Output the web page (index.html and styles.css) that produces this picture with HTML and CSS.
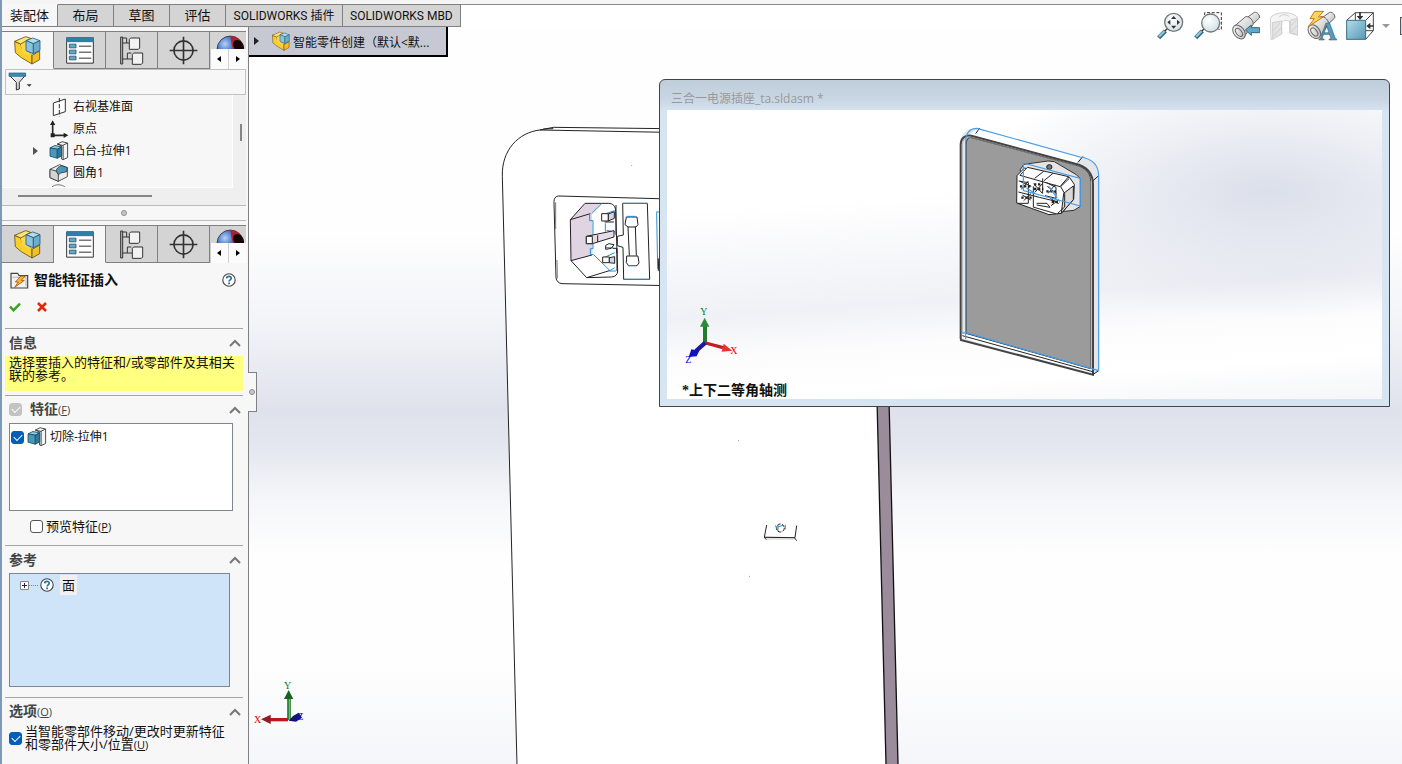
FILE: index.html
```html
<!DOCTYPE html>
<html lang="zh-CN">
<head>
<meta charset="utf-8">
<title>SOLIDWORKS</title>
<link rel="stylesheet" href="styles.css">
</head>
<body>
<svg class="defs" aria-hidden="true">
  <defs>
    <linearGradient id="blueFace" x1="0" y1="0" x2="1" y2="1"><stop offset="0" stop-color="#b4dceb"/><stop offset="1" stop-color="#5598b6"/></linearGradient>
    <linearGradient id="steel" x1="0" y1="0" x2="1" y2="1"><stop offset="0" stop-color="#fff"/><stop offset="1" stop-color="#b9b9b9"/></linearGradient>
    <radialGradient id="ball" cx=".3" cy=".3" r=".8"><stop offset="0" stop-color="#b7d2f5"/><stop offset=".4" stop-color="#3e6fc4"/><stop offset="1" stop-color="#142c66"/></radialGradient>
    <radialGradient id="lens" cx=".4" cy=".35" r=".7"><stop offset="0" stop-color="#fff"/><stop offset="1" stop-color="#cfe0e6"/></radialGradient>
  </defs>
  <symbol id="part" viewBox="46 104 81 90">
    <g stroke="#6b4e0c" stroke-width="2.5" stroke-linejoin="round">
      <path fill="#f9cf2d" d="M48 123l18 8 4 14 14 5 16 15v26L68 172 50 157z"/>
      <path fill="#fbd84a" d="M66 131l20-10v32l14 12-16-3-14-10z" stroke="none"/>
      <path fill="#eec02a" d="M100 165l23-13v26l-23 13z"/>
      <path fill="#fce47a" d="M48 123l33-14 15 5-30 17z"/>
    </g>
    <g stroke="#2a5b79" stroke-width="2.5" stroke-linejoin="round">
      <path fill="#b4ddec" d="M82 121l20-8 22 8-20 9z"/><path fill="#8cc4dd" d="M82 121l22 9v30l-22-9z"/><path fill="#6badcc" d="M104 130l20-9v29l-20 10z"/>
    </g>
  </symbol>
  <symbol id="props" viewBox="198 110 84 80">
    <path fill="#fff" stroke="#333" stroke-width="3" d="M200 112h80v76h-80z"/><path fill="#2c7fa5" d="M199 111h82v14h-82z"/>
    <g fill="#62a9c9" stroke="#244f66" stroke-width="2.5"><path d="M208 131h20v11h-20zM208 149h20v11h-20zM208 167h20v11h-20z"/></g>
    <path stroke="#333" stroke-width="3" d="M237 137h37M237 155h37M237 173h37"/>
  </symbol>
  <symbol id="config" viewBox="360 106 75 87">
    <g fill="#f2f2f2" stroke="#333" stroke-width="3">
      <path fill="#bbb" d="M365 109h6v81h-6z"/><path d="M371 127h20M371 175h29M371 112h12v15M385 175v-18h12" fill="none"/>
      <path d="M391 116l4-4h27v30l-4 4h-27zM400 161l4-4h27v30l-4 4h-27z"/>
    </g>
  </symbol>
  <symbol id="target" viewBox="508 106 88 88">
    <circle cx="552" cy="150" r="29" fill="none" stroke="#333" stroke-width="5"/><path d="M510 150h84M552 108v84" stroke="#333" stroke-width="5"/>
  </symbol>
  <symbol id="globe" viewBox="648 104 82 41">
    <circle cx="690" cy="146" r="39" fill="url(#ball)" stroke="#222" stroke-width="2"/>
    <path d="M690 107c18 0 33 12 38 28l-10 10h-20c-6-12-5-26-8-38z" fill="#b21f2e"/><ellipse cx="714" cy="136" rx="14" ry="19" transform="rotate(-35 714 136)" fill="#150506"/>
  </symbol>
  <symbol id="boss" viewBox="148 138 58 56">
    <g stroke="#333" stroke-width="2.5" stroke-linejoin="round"><path fill="#f4f4f4" d="M172 146l14-7 16 4v42l-13 6-5-2v-38z"/><path fill="none" d="M189 191v-42l13-6M172 146l17 4"/>
    <path fill="#8ec5dd" stroke="#1f4f68" d="M151 157l14-7 20 4-13 7z"/><path fill="#4a99bd" stroke="#1f4f68" d="M151 157l21 4v26l-21-6z"/><path fill="#2f7698" stroke="#1f4f68" d="M172 161l13-7v26l-13 7z"/></g>
  </symbol>
  <symbol id="chevron" viewBox="0 0 12 8"><path fill="none" stroke="#777" stroke-width="2" d="M1 7l5-5 5 5"/></symbol>
  <symbol id="help" viewBox="0 0 14 14"><circle cx="7" cy="7" r="6.2" fill="#fff" stroke="#444" stroke-width="1.1"/><path d="M4.700 5.400C4.800 2.600 9.400 2.800 9.200 5.300 9 6.800 7.100 6.900 7.100 8.600" fill="none" stroke="#267196" stroke-width="1.700"/><path d="M6.200 9.600h1.800v1.700H6.200z" fill="#267196"/></symbol>
</svg>

<div class="app">
  <header class="ribbon">
    <nav class="tabs" aria-label="命令选项卡">
      <button class="tab tab-on">装配体</button><button class="tab">布局</button><button class="tab">草图</button><button class="tab">评估</button><button class="tab">SOLIDWORKS 插件</button><button class="tab">SOLIDWORKS MBD</button>
    </nav>
    <div class="ribbon-rest"></div>
  </header>

  <aside class="panel">
    <div class="icon-tabs">
      <button class="itab itab-on" aria-label="设计树"><svg width="27" height="30"><use href="#part"/></svg></button>
      <button class="itab" aria-label="属性"><svg width="28" height="27"><use href="#props"/></svg></button>
      <button class="itab" aria-label="配置"><svg width="25" height="29"><use href="#config"/></svg></button>
      <button class="itab" aria-label="尺寸"><svg width="29" height="29"><use href="#target"/></svg></button>
      <div class="itab-more"><svg class="globe" width="28" height="14"><use href="#globe"/></svg>
        <div class="pager"><button aria-label="向左"><svg width="5" height="6"><path d="M4 0v6L0 3z"/></svg></button><button aria-label="向右"><svg width="5" height="6"><path d="M1 0v6l4-3z"/></svg></button></div>
      </div>
    </div>
    <button class="filter" aria-label="过滤器"><svg width="24" height="20" viewBox="22 220 72 60"><path d="M26 230h48L56 251v20l-9 3v-23z" fill="url(#steel)" stroke="#333" stroke-width="3"/><path d="M25 223h50v10H25z" fill="#398db5" stroke="#205a78" stroke-width="2"/><path d="M78 257h15l-7 7z" fill="#333"/></svg></button>
    <div class="tree-wrap">
      <ul class="tree">
        <li><span class="twist"></span><svg width="20" height="20" viewBox="148 2 60 60"><path fill="#fcfcfc" stroke="#333" stroke-width="3" d="M161 20l36-12v38l-36 12z"/><path stroke="#333" stroke-width="3" stroke-dasharray="13 5" d="M179 5v55"/></svg>右视基准面</li>
        <li><span class="twist"></span><svg width="20" height="20" viewBox="148 68 60 60"><path fill="none" stroke="#2a2a2a" stroke-width="5" d="M159 80v37h36"/><path fill="#222" d="M151 86l8-14 8 14zM192 109l14 8-14 8zM153 111h12v12h-12z"/></svg>原点</li>
        <li><span class="twist"><svg width="5" height="8"><path d="M0 0l5 4-5 4z" fill="#555"/></svg></span><svg width="20" height="20"><use href="#boss"/></svg>凸台-拉伸1</li>
        <li><span class="twist"></span><svg width="20" height="20" viewBox="148 200 60 60"><g stroke="#333" stroke-width="2.5" stroke-linejoin="round"><path fill="#eee" d="M151 219l29-14 23 9v27l-27 14-25-11z"/><path fill="#4a99bd" d="M169 224c2-8 8-13 16-16l18 6-2 12-18 4c-4 2-6 4-7 7z"/><path fill="#d4d4d4" d="M151 219l18 5 7 11v20l-25-11z"/></g></svg>圆角1</li>
        <li class="tree-cut"><span class="twist"></span><svg width="20" height="4"><path d="M3 3c3-3 9-3 13 0" fill="none" stroke="#777"/></svg></li>
      </ul>
      <div class="vscroll"><i></i></div>
      <div class="hscroll"><i></i></div>
    </div>
    <div class="splitter"><i></i></div>
    <div class="icon-tabs">
      <button class="itab" aria-label="设计树"><svg width="27" height="30"><use href="#part"/></svg></button>
      <button class="itab itab-on" aria-label="属性"><svg width="28" height="27"><use href="#props"/></svg></button>
      <button class="itab" aria-label="配置"><svg width="25" height="29"><use href="#config"/></svg></button>
      <button class="itab" aria-label="尺寸"><svg width="29" height="29"><use href="#target"/></svg></button>
      <div class="itab-more"><svg class="globe" width="28" height="14"><use href="#globe"/></svg>
        <div class="pager"><button aria-label="向左"><svg width="5" height="6"><path d="M4 0v6L0 3z"/></svg></button><button aria-label="向右"><svg width="5" height="6"><path d="M1 0v6l4-3z"/></svg></button></div>
      </div>
    </div>

    <div class="pm-head">
      <svg width="19" height="19" viewBox="29 155 57 57"><path fill="#f2f2f2" stroke="#444" stroke-width="3.5" d="M32 206v-44h20l4 7h26v37z"/><path fill="none" stroke="#999" stroke-width="2" d="M37 174h40v27"/><path fill="#fbb72c" stroke="#a5500e" stroke-width="2.5" stroke-linejoin="round" d="M62 170h12L63 183h9l-29 21 11-16h-9z"/></svg>
      <h1>智能特征插入</h1>
      <button class="plain" aria-label="帮助"><svg width="14" height="14"><use href="#help"/></svg></button>
    </div>
    <div class="pm-actions">
      <button class="plain" aria-label="确定"><svg width="12" height="10"><path d="M1 4.500l3.500 3.800L11 1.600" fill="none" stroke="#3ba11f" stroke-width="2.500"/></svg></button>
      <button class="plain" aria-label="取消"><svg width="10" height="10"><path d="M1 1l8 8M9 1l-8 8" stroke="#dc2a0b" stroke-width="2.500"/></svg></button>
    </div>

    <section class="group">
      <h2><span>信息</span><svg width="12" height="8"><use href="#chevron"/></svg></h2>
      <p class="message">选择要插入的特征和/或零部件及其相关联的参考。</p>
    </section>
    <section class="group">
      <h2><input type="checkbox" id="feat" class="box" checked disabled><label for="feat">特征<small>(<u>F</u>)</small></label><svg width="12" height="8"><use href="#chevron"/></svg></h2>
      <div class="list">
        <label class="list-row"><input type="checkbox" class="box" checked><svg width="20" height="20"><use href="#boss"/></svg>切除-拉伸1</label>
      </div>
      <label class="preview"><input type="checkbox" class="box"><span>预览特征<small>(<u>P</u>)</small></span></label>
    </section>
    <section class="group">
      <h2><span>参考</span><svg width="12" height="8"><use href="#chevron"/></svg></h2>
      <div class="refs">
        <div class="ref-row"><svg width="18" height="9"><path d="M.5.5h8v8h-8z" fill="#fff" stroke="#888"/><path d="M2 4.500h5M4.500 2v5" stroke="#224"/><path d="M9 4.500h9" stroke="#888" stroke-dasharray="1 1"/></svg><svg width="14" height="14"><use href="#help"/></svg><span>面</span></div>
      </div>
    </section>
    <section class="group">
      <h2><span>选项<small>(<u>O</u>)</small></span><svg width="12" height="8"><use href="#chevron"/></svg></h2>
      <label class="option"><input type="checkbox" class="box" checked><span>当智能零部件移动/更改时更新特征和零部件大小/位置<small>(<u>U</u>)</small></span></label>
    </section>
    <div class="grip"><i></i></div>
  </aside>

  <main class="stage">
    <svg class="model" viewBox="249 27 1153 737" preserveAspectRatio="xMinYMin slice" aria-label="零件模型">
      <path fill="#fff" d="M502 180C501 155 518 130 545 128L660 127H875L889 406 898 764H517z"/>
      <path fill="#9b8c9b" d="M877 400h12l9 364h-12z"/>
      <path fill="none" stroke="#111" stroke-width="1.300" d="M889 400l9 364M877 400l9 364"/>
      <g transform="translate(490 115) scale(.33333)" fill="none" stroke="#222" stroke-width="3">
        <path d="M81 1950L46 540 37 185C34 105 86 52 150 45M150 45l40-8 340 4M150 45l380 7M160 42l30-1"/>
        <path d="M205 243l335 9M205 243c-9 1-13 8-13 17l6 228c1 10 8 17 18 18l324 6"/><path stroke="#777" d="M197 262v80M201 435l1 55"/>
        <path fill="#e0d4e2" stroke="none" d="M285 265h50l-29 31 2 124-65 17-2-123z"/>
        <path d="M335 265h-50l-44 49 2 123 47 51 75-2c12-1 18-8 18-18l-6-178c0-16-7-25-22-25zM241 314l60-18M243 437l63-17M290 488l68-21"/>
        <path stroke="#2191d6" d="M335 266l-29 29M299 297v20h10v84h-8v18h10l50 49M374 287l-30 10M346 325v25M350 346l25 5M345 398h25M374 413l-28 13M374 458l-16 10h20"/>
        <path fill="#fff" d="M335 296h20v22h-20zM338 426h20v17h-20z"/><path fill="#d2d4e8" d="M355 297l18-7v20l-18 8zM358 428l16-3v20l-16-2z"/>
        <path fill="#e8dbe8" d="M289 364l83-17v19l-65 20h-18z"/><path fill="#fff" d="M289 364h18v22h-18z"/><path d="M323 361v20M347 391l10-5 15 3-8 11-17 3zM344 321h28M368 400h12v14M378 270v90M381 400v68"/>
        <path d="M398 265h74l7 228h-78l-2-96-17-5M398 265l2 95-18 4v27M414 335l4 87M436 335l3 87M409 306h32l3 23-6 7h-24l-9-7zM410 423h34l3 21-6 8h-25l-7-9z"/>
        <path stroke="#2191d6" d="M398 265h74M401 493h78M411 304h25M413 452h25M498 291h20M503 467h12M500 293l3 170"/>
        <path d="M505 430l1 36"/><path d="M425 151v2" stroke="#777"/>
      </g>
      <g transform="translate(740 400) scale(.33333)" fill="none" stroke="#222" stroke-width="3"><path fill="#dfe2df" stroke="none" d="M74 408l92 4-5 8-82-1z"/><path d="M80 375l-7 37 92 1 5-36M73 412l6 7M163 413l7 9"/><circle cx="121" cy="384" r="12" stroke-dasharray="11 4"/><path stroke="#2191d6" d="M106 376l8 17M112 381l18-5"/><path stroke="#777" d="M114 375v19M136 374v14M28 529h2M-6 122h2"/></g>
      <g transform="translate(0 590) scale(.33333)">
        <path stroke="#217c2d" stroke-width="11" d="M867 390v-67"/><path stroke="#7dcc82" stroke-width="3" d="M868 390v-67"/><path fill="#16651f" d="M852 327l14-27 14 27z"/><path stroke="#bd171e" stroke-width="10" d="M864 389h-58"/><path fill="#921c24" d="M812 374l-29 14 29 14z"/><path fill="#13137a" d="M866 392l13-14 17-10 10 15-18 12z"/>
        <g class="axis"><text x="762" y="399" fill="#e00">X</text><text x="852" y="297" fill="#087d10">Y</text><text x="892" y="389" fill="#00e">Z</text></g>
      </g>
    </svg>
    <button class="flyout"><svg width="5" height="8"><path d="M0 0l5 4-5 4z" fill="#222"/></svg><svg width="18" height="20"><use href="#part"/></svg><span>智能零件创建（默认&lt;默...</span></button>

    <div class="view-tools">
      <button aria-label="整屏显示全图"><svg viewBox="48 30 84 96"><path d="M56 113l20-20" stroke="#36677e" stroke-width="13"/><path d="M57 110l17-17" stroke="#8fc5db" stroke-width="7"/><path d="M74 94l9-9" stroke="#333" stroke-width="4"/><circle cx="101" cy="67" r="27" fill="url(#lens)" stroke="#777" stroke-width="4"/><path fill="#333" d="M101 48l8 9H93zM101 86l8-9H93zM82 67l9-8v16zM120 67l-9-8v16z"/></svg></button>
      <button aria-label="局部放大"><svg viewBox="162 30 84 96"><path d="M167 113l20-20" stroke="#36677e" stroke-width="13"/><path d="M168 110l17-17" stroke="#8fc5db" stroke-width="7"/><path d="M185 94l9-9" stroke="#333" stroke-width="4"/><circle cx="212" cy="69" r="27" fill="url(#lens)" stroke="#777" stroke-width="4"/><path fill="none" stroke="#333" stroke-width="3" stroke-dasharray="9 5" d="M194 45v-7h50v50h-9"/></svg></button>
      <button aria-label="上一视图"><svg viewBox="276 30 84 96"><g fill="url(#steel)" stroke="#666" stroke-width="3"><path d="M322 52l21-15c9-2 18 9 15 17l-18 17z"/><path d="M284 78l33-28c12-2 25 13 22 24l-28 38z"/><ellipse cx="297" cy="96" rx="16" ry="23" transform="rotate(-38 297 96)"/><ellipse cx="297" cy="97" rx="8" ry="14" transform="rotate(-38 297 97)"/></g><path fill="#63a9c7" stroke="#2e6780" stroke-width="3" d="M316 90l18-15v8h25v15h-25v8z"/></svg></button>
      <button aria-label="剖面视图" disabled><svg viewBox="390 30 84 96"><g fill="#f5f5f5" stroke="#cfcfcf" stroke-width="3" stroke-linejoin="round"><path d="M391 55c8-22 74-22 82-1v52l-24-7V65c-8-6-18-5-24 2v35l-32 17z"/><path fill="#e4e4e4" d="M398 68l27-5v38l-27 17zM451 60l22-5v49l-22-6z"/><path fill="none" d="M400 91l20-22M400 109l24-26M453 77l17-17M453 96l19-20M417 52c7-10 24-10 31-1"/></g></svg></button>
      <button aria-label="动态注解视图"><svg class="spill" viewBox="504 30 84 96"><g fill="url(#steel)" stroke="#666" stroke-width="3"><path d="M548 52l21-15c9-2 18 9 15 17l-18 17z"/><path d="M510 76l33-26c12-2 25 13 22 24l-28 38z"/><ellipse cx="523" cy="95" rx="16" ry="23" transform="rotate(-38 523 95)"/><ellipse cx="523" cy="96" rx="8" ry="14" transform="rotate(-38 523 96)"/></g><path fill="#fcd65d" stroke="#c6751e" stroke-width="3" d="M524 34h27l-16 17h14l-45 30 19-25h-13z"/><text class="annot" x="536" y="121">A</text></svg></button>
      <button aria-label="视图定向"><svg viewBox="618 30 84 96"><path fill="#fff" stroke="#444" stroke-width="3" d="M620 61l26-23h54v54l-23 26M646 38v54h54M620 118l26-26M677 61l23-23"/><path fill="url(#blueFace)" stroke="#376e87" stroke-width="3" d="M620 61h57v57h-57z"/><path stroke="#333" stroke-width="5" d="M660 36v16M701 78h-14"/><path fill="#333" d="M650 48h20l-10 12zM691 68v20l-12-10z"/></svg></button>
      <button class="drop" aria-label="更多"><svg viewBox="0 0 8 4"><path fill="#999" d="M0 0h8L4 4z"/></svg></button>
      <span class="next-tool"></span>
    </div>

    <section class="preview-win">
      <h2>三合一电源插座_ta.sldasm *</h2>
      <div class="preview-body">
        <svg class="model" viewBox="667 110 715 289" preserveAspectRatio="xMinYMin slice" aria-label="预览模型">
          <g transform="translate(940 115) scale(.33333)" fill="none" stroke="#222" stroke-width="3">
            <path fill="#e3e5ea" stroke="none" d="M60 87c0-30 22-47 49-47l309 86c38 6 57 24 58 57v587l-18 11L60 673z"/>
            <path fill="#fff" stroke="none" d="M88 59l25-18 309 88-16 16zM70 655l388 108v16L64 668z"/>
            <path fill="#9b9b9b" d="M78 655V92c0-13 3-24 13-25l317 84c29 7 44 23 44 50v560z"/>
            <path stroke="#444" stroke-width="6" d="M62 672V89c1-22 16-29 32-27l312 84c38 9 53 31 53 63v570L60 674"/>
            <path stroke="#999" stroke-width="2" d="M67 655V89c1-18 14-24 28-21l310 83c35 9 47 31 47 60v549"/>
            <path d="M107 56l12-17M414 142l15-18M458 198l17-15M458 779l18-12M67 662l391 108"/>
            <path stroke="#459ce9" stroke-width="3.500" d="M77 672V83c0-29 12-43 34-43l309 86c38 5 56 24 56 57v584M65 654l12-1 399 114"/>
            <path fill="#e5e5e5" stroke="#333" d="M240 165l12-17 72-10 19 2 66 39 12 12v83l-19 12-85 9z"/>
            <path fill="#fff" d="M231 182l22-23 86 20 50 9 14 20-2 45-37 42-37 4-97-35z"/>
            <path fill="#fff" d="M240 181l22-24 124 28-26 30z"/>
            <path fill="#d9d9d9" d="M371 235l29-22v41l-36 41z"/>
            <path d="M284 190l27-21M312 197l27-22M362 215l26-25M362 215l12 21v40l-22 20M236 198l29 5v62h-31M280 214v62M308 190v46M319 203l29 14v33l-33-8M279 276l68 20M235 231l63 16 54 13M290 265h31l9 12-40-7M240 199l34 15M244 223l21-25M281 206l25 28M285 232l22-26M322 214l27 21M325 235l20-26M247 240l25 15M251 257l22-21M331 250l25 16M333 272l24-18"/>
            <path stroke-width="7" stroke-dasharray="7 5" d="M240 214h34M282 222h28M319 229h29M244 248h31M335 261h25M282 208h23"/>
            <ellipse cx="328" cy="156" rx="8" ry="7" fill="#777"/>
            <path stroke="#459ce9" stroke-width="3.500" d="M250 144l171 46v83l-171-46zM260 219l27 18M326 213l26 37"/>
          </g>
          <g transform="translate(655 290) scale(.33333)">
            <path stroke="#217c2d" stroke-width="12" d="M150 160v-58"/><path fill="#2c8b38" d="M135 110l14-27 14 27z"/><path stroke="#c51c22" stroke-width="10" d="M152 159l52 14"/><path fill="#e33234" d="M206 161l26 21-32 3z"/><path stroke="#1b1b9b" stroke-width="13" d="M151 158l-28 25"/><path fill="#1313c6" d="M109 178l24 4-8 17-24 2z"/>
            <g class="axis"><text x="226" y="192" fill="#e00">X</text><text x="136" y="75" fill="#087d10">Y</text><text x="91" y="218" fill="#00e">Z</text></g>
          </g>
        </svg>
        <p class="view-name">*上下二等角轴测</p>
      </div>
    </section>
  </main>
</div>
</body>
</html>
```
FILE: styles.css
```css
* { box-sizing: border-box; }
body {
  margin: 0;
  background: #fff;
  color: #111;
  font: 12px/16px "Open Sans", "Noto Sans CJK SC", sans-serif;
}
button { margin: 0; padding: 0; border: 0; background: none; color: inherit; font: inherit; }
svg { display: block; flex: none; }
h1, h2, p, ul { margin: 0; padding: 0; }
.defs { position: absolute; width: 0; height: 0; }

.app {
  display: grid;
  grid-template-columns: 247px 1fr;
  grid-template-rows: auto 1fr;
  height: 100vh;
  overflow: hidden;
  border-left: 2px solid #7c9ab8;
}

/* Command tabs */
.ribbon { grid-column: 1 / -1; display: flex; height: 27px; }
.tabs { display: flex; padding-top: 4px; background: #f5f5f5; }
.tab {
  min-width: 117px;
  padding: 0 7px;
  border: 1px solid #808080;
  border-left: 0;
  background: #d4d4d4;
  font-family: Roboto, "Noto Sans CJK SC", sans-serif;
  font-size: 12px;
  white-space: nowrap;
}
.tab:nth-child(-n+4) { min-width: 56px; padding: 0; font-size: 13px; }
.tab:first-child { border-top-color: transparent; background: #f7f7f7; }
.ribbon-rest { flex: 1; height: 5px; background: #f5f5f5; border-bottom: 1px solid #8a8a8a; }

/* Side panel */
.panel {
  position: relative;
  z-index: 1;
  display: flex;
  flex-direction: column;
  background: #f7f7f7;
  border-right: 1px solid #808080;
  padding-top: 4px;
}
.panel > * { flex: none; }
.icon-tabs { display: flex; height: 38px; margin-right: 2px; border-top: 1px solid #808080; }
.itab {
  display: grid;
  place-items: center;
  width: 52px;
  background: #d4d4d4;
  border-right: 1px solid #808080;
  border-bottom: 1px solid #808080;
}
.itab-on { background: #f7f7f7; border-bottom-color: transparent; }
.itab-more { flex: 1; display: flex; flex-direction: column; justify-content: space-between; align-items: flex-end; background: #d4d4d4; overflow: hidden; }
.globe { margin: 3px 2px 0 0; }
.pager { display: flex; gap: 1px; width: 100%; height: 20px; padding-left: 1px; background: #d0d0d0; }
.pager button { flex: 1; display: grid; place-items: center; background: #fbfbfb; }
.filter { display: block; height: 26px; margin: 0 2px 0 3px; padding: 2px; border: 1px solid #c2c2c2; }
.tree-wrap { display: grid; grid-template: 93px 17px / 231px 1fr; margin-right: 2px; background: #efefef; }
.tree { padding-top: 1px; list-style: none; overflow: hidden; background: #f7f7f7; border-bottom: 1px solid #fff; border-right: 1px solid #fff; }
.tree li { display: flex; align-items: center; height: 22px; gap: 4px; }
.tree li.tree-cut { height: 4px; }
.twist { width: 43px; padding-left: 31px; }
.vscroll { padding: 29px 0 0 7px; }
.vscroll i { display: block; width: 2px; height: 17px; background: #858585; }
.hscroll { grid-column: 1 / -1; padding: 7px 16px; }
.hscroll i { display: block; width: 134px; height: 2px; background: #858585; }
.splitter { display: grid; place-items: center; height: 16px; margin: 0 2px 4px 0; border: solid #bbb; border-width: 1px 0; }
.splitter i, .grip i { width: 6px; height: 6px; border: 1px solid #8c8c8c; border-radius: 50%; background: #c8c8c8; }

.pm-head { display: flex; align-items: center; gap: 5px; padding: 7px 12px 0 8px; }
.pm-head h1 { flex: 1; font-size: 14px; line-height: 20px; }
.pm-actions { display: flex; align-items: center; gap: 16px; height: 38px; padding: 0 7px 5px; }
.group { margin: 0 5px 0 3px; border-top: 1px solid #a5a5a5; }
.group h2 { display: flex; align-items: center; gap: 8px; height: 27px; padding: 0 2px 0 4px; color: #444; font-size: 14px; font-weight: 600; }
.group h2 > svg { margin-left: auto; }
small { font-size: 11px; font-weight: 400; }
.message { height: 35px; margin-bottom: 4px; padding: 0 4px; background: #ffff80; font-size: 13px; line-height: 13px; }
.list { height: 88px; margin: 0 10px 0 4px; padding: 3px 1px; border: 1px solid #7f8490; background: #fff; }
.list-row { display: flex; align-items: center; gap: 3px; }
.box { appearance: none; flex: none; width: 13px; height: 13px; margin: 0; border: 1px solid #555; border-radius: 3px; background: #fdfdfd; }
.box:checked { border-color: #005fb8; background: #005fb8; }
.box:disabled { border-color: #c3c3c3; background: #c3c3c3; }
.box:checked::after { content: ""; display: block; width: 7px; height: 4px; margin: 2px; border: solid #fff; border-width: 0 0 1px 1px; transform: rotate(-45deg); }
.preview { display: flex; align-items: center; gap: 3px; height: 34px; padding: 0 25px 4px; font-size: 13px; }
.refs { height: 114px; margin: 0 13px 10px 4px; padding: 1px 10px; border: 1px solid #7f8490; background: #cfe4f9; }
.ref-row { display: flex; align-items: center; gap: 2px; }
.ref-row span { margin-left: 4px; padding: 2px; background: #f0f0f0; font-size: 13px; }
.option { display: flex; align-items: center; gap: 3px; padding: 0 13px 0 4px; font-size: 13px; line-height: 13px; }
.grip {
  position: absolute;
  top: 345px;
  left: 100%;
  display: grid;
  place-items: center;
  width: 9px;
  height: 40px;
  border: 1px solid #808080;
  border-left: 0;
  background: #f7f7f7;
}

/* Graphics area */
.stage {
  position: relative;
  background: linear-gradient(#fefefe 0, #fefefe 28%, #f3f4f8 40%, #dfe2ec 52%, #e4e7ef 57%, #f5f6f9 64%, #fefefe 72%, #fefefe 86%, #f5f6f9 100%);
}
.model { width: 100%; height: 100%; }
.axis { font: 30px "Liberation Serif", serif; }
.annot { font: bold 74px "Liberation Serif", serif; fill: #5d9dbb; stroke: #2c6680; stroke-width: 2px; }
.spill { overflow: visible; }
.flyout {
  position: absolute;
  top: 0;
  left: 0;
  display: flex;
  align-items: center;
  gap: 8px;
  width: 199px;
  height: 30px;
  padding-left: 5px;
  border: solid #000;
  border-width: 0 2px 2px 0;
  background: #c6c9d3;
  white-space: nowrap;
}
.flyout svg + svg { margin-left: 5px; }
.flyout span { margin-left: -5px; padding-top: 4px; }
.view-tools { position: absolute; top: -17px; right: 0; display: flex; align-items: center; gap: 10px; }
.view-tools button { width: 28px; }
.view-tools button.drop { width: 8px; margin-left: -2px; }
.next-tool { width: 2px; height: 18px; border: 1px solid #555; border-right: 0; background: #ccdbe5; }

/* Floating preview window */
.preview-win {
  position: absolute;
  top: 52px;
  right: 12px;
  width: 731px;
  padding: 0 7px 7px;
  border: 1px solid #444;
  border-radius: 6px 6px 0 0;
  background: linear-gradient(#bfccda 0, #c9d7e5 20px, #d7e4f1 32px);
}
.preview-win h2 { padding: 11px 4px 3px; color: #999; font-size: 12px; font-weight: 400; }
.preview-body {
  position: relative;
  height: 289px;
  background:
    radial-gradient(ellipse 300px 130px at 84% 28%, #dbdfea, #dbdfea00),
    linear-gradient(176deg, #fff 30%, #f0f1f6 62%, #fcfcfd 74%, #fff 86%, #f5f6f9 100%);
}
.view-name { position: absolute; left: 15px; bottom: 0; font: bold 14px/16px "Liberation Serif", "Noto Sans CJK SC", serif; }
```
